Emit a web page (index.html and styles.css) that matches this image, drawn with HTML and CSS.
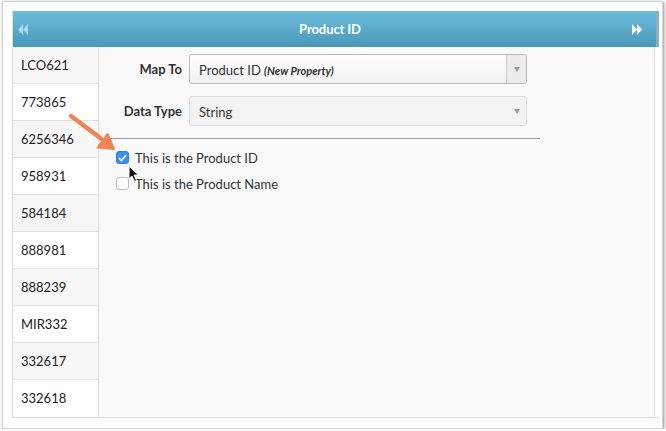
FILE: index.html
```html
<!DOCTYPE html>
<html lang="en">
<head>
    <meta charset="UTF-8">
    <title>Product ID mapping</title>
    <link rel="stylesheet" href="styles.css">
</head>
<body>

    <div class="frame">
        <div class="panel">
            <!-- Header with column navigation -->
            <div class="header">
                <span class="nav nav-prev">
                    <svg width="10" height="11" viewBox="0 0 10 11"><path d="M5 0 L0 5.5 L5 11 Z M10 0 L5 5.5 L10 11 Z" fill="#a9dcec"/></svg>
                </span>
                <span class="title">Product ID</span>
                <span class="nav nav-next">
                    <svg width="10" height="11" viewBox="0 0 10 11"><path d="M0 0 L5 5.5 L0 11 Z M5 0 L10 5.5 L5 11 Z" fill="#ffffff"/></svg>
                </span>
            </div>

            <div class="body">
                <!-- Sample values of the column -->
                <ul class="values">
                    <li>LCO621</li>
                    <li>773865</li>
                    <li>6256346</li>
                    <li>958931</li>
                    <li>584184</li>
                    <li>888981</li>
                    <li>888239</li>
                    <li>MIR332</li>
                    <li>332617</li>
                    <li>332618</li>
                </ul>

                <div class="content">
                    <div class="form">
                        <label class="form-label">Map To</label>
                        <div class="select">
                            <span class="select-text">Product ID <em>(New Property)</em></span>
                            <span class="select-arrow"><span class="caret"></span></span>
                        </div>

                        <label class="form-label">Data Type</label>
                        <div class="select select-disabled">
                            <span class="select-text">String</span>
                            <span class="select-arrow"><span class="caret"></span></span>
                        </div>
                    </div>

                    <div class="divider"></div>

                    <div class="checks">
                        <label class="check">
                            <span class="box box-checked">
                                <svg width="9" height="8" viewBox="0 0 9 8"><path d="M1 4.2 L3.4 6.5 L8 1.2" fill="none" stroke="#fff" stroke-width="1.7"/></svg>
                            </span>
                            This is the Product ID
                        </label>
                        <label class="check">
                            <span class="box"></span>
                            This is the Product Name
                        </label>
                    </div>
                </div>
            </div>
        </div>

        <!-- Annotation arrow and mouse pointer -->
        <svg class="annotation" width="52" height="44" viewBox="0 0 52 44">
            <path d="M5 5 L35 27.5" stroke="#ef8455" stroke-width="4.5" stroke-linecap="round"/>
            <path d="M48 38 L31.5 36.5 L41.5 23 Z" fill="#ef8455" stroke="#ef8455" stroke-width="2" stroke-linejoin="round"/>
        </svg>
        <svg class="cursor" width="12" height="18" viewBox="0 0 12 18">
            <path d="M1 1 L1 14 L4 11 L6.5 16.5 L8.5 15.5 L6 10 L10.5 10 Z" fill="#111" stroke="#fff" stroke-width="1"/>
        </svg>
    </div>

</body>
</html>
```

FILE: styles.css
```css
body {
    margin: 0;
    background: #fff;
    font-family: Lato, "Open Sans", Arial, sans-serif;
    font-size: 13px;
    color: #333;
}

.frame {
    position: relative;
    box-sizing: border-box;
    width: 661px;
    height: 428px;
    margin: 1px 0 0 2px;
    padding: 9px 3px 0 9px;
    border: 1px solid #d4d4d4;
    box-shadow: 1px 1px 3px rgba(0, 0, 0, 0.45);
    background: #fff;
}

.panel {
    border-left: 1px solid #dcdcdc;
    border-bottom: 1px solid #dcdcdc;
}

/* Header */
.header {
    display: flex;
    align-items: center;
    justify-content: space-between;
    height: 36px;
    padding: 0 14px 0 5px;
    background: linear-gradient(#6cbddb, #4a97b8);
    border-right: 3px solid #85b3c3;
    color: #fff;
}

.nav {
    display: flex;
    align-items: center;
}

.title {
    font-weight: bold;
    font-size: 13px;
    letter-spacing: -0.1px;
}

.body {
    display: flex;
    height: 370px;
}

/* Left column of values */
.values {
    list-style: none;
    margin: 0;
    padding: 0;
    width: 85px;
    border-right: 1px solid #dcdcdc;
    background: #fff;
}

.values li {
    box-sizing: border-box;
    height: 37px;
    padding: 10px 0 0 8px;
    border-bottom: 1px solid #e2e2e2;
    color: #222;
}

.values li:nth-child(odd) {
    background: #f7f7f7;
}

.values li:last-child {
    border-bottom: none;
}

/* Right content */
.content {
    flex: 1;
    background: #f9f9f9;
    border-right: 1px solid #dcdcdc;
    margin-right: 4px;
    padding-top: 7px;
}

.form {
    display: grid;
    grid-template-columns: 83px 338px;
    column-gap: 7px;
    row-gap: 12px;
    align-items: center;
}

.form-label {
    text-align: right;
    font-weight: bold;
    color: #333;
}

.select {
    box-sizing: border-box;
    display: flex;
    height: 30px;
    border: 1px solid #b9b9b9;
    border-radius: 3px;
    background: linear-gradient(#ffffff, #f1f1f1);
}

.select-text {
    flex: 1;
    padding: 7px 0 0 9px;
    color: #333;
}

.select-text em {
    font-weight: bold;
    font-style: italic;
    font-size: 11px;
    color: #333;
}

.select-arrow {
    display: flex;
    align-items: center;
    justify-content: center;
    width: 19px;
    border-left: 1px solid #c9c9c9;
    background: #ececec;
    border-radius: 0 3px 3px 0;
}

.caret {
    width: 0;
    height: 0;
    border-left: 3px solid transparent;
    border-right: 3px solid transparent;
    border-top: 5px solid #999;
}

.select-disabled {
    border-color: #dedede;
    background: #f3f3f3;
}

.select-disabled .select-arrow {
    border-left: none;
    background: none;
}

.divider {
    width: 431px;
    height: 1px;
    margin: 12px 0 0 10px;
    background: #9a9a9a;
}

.checks {
    display: flex;
    flex-direction: column;
    gap: 9px;
    padding: 10px 0 0 17px;
}

.check {
    display: flex;
    align-items: center;
    gap: 6px;
    height: 17px;
    color: #333;
}

.box {
    box-sizing: border-box;
    display: flex;
    align-items: center;
    justify-content: center;
    width: 13px;
    height: 13px;
    border: 1px solid #bdbdbd;
    border-radius: 3px;
    background: #fff;
}

.box-checked {
    border-color: #2d82e0;
    background: #3b8ff0;
}

.annotation {
    position: absolute;
    left: 63px;
    top: 109px;
}

.cursor {
    position: absolute;
    left: 125px;
    top: 163px;
}
```
